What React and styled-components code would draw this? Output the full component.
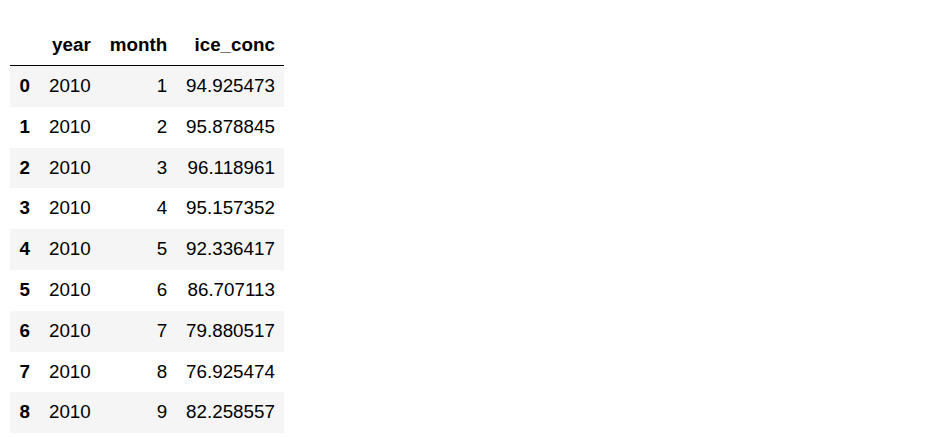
import React from 'react';
import styled, { createGlobalStyle } from 'styled-components';

const rows = [
	[2010, 1, '94.925473'],
	[2010, 2, '95.878845'],
	[2010, 3, '96.118961'],
	[2010, 4, '95.157352'],
	[2010, 5, '92.336417'],
	[2010, 6, '86.707113'],
	[2010, 7, '79.880517'],
	[2010, 8, '76.925474'],
	[2010, 9, '82.258557'],
];

const App = () => {
	return (
		<>
			<Global />
			<Frame>
				<Table>
					<thead>
						<tr>
							<Head></Head>
							<Head>year</Head>
							<Head>month</Head>
							<Head>ice_conc</Head>
						</tr>
					</thead>
					<tbody>
						{rows.map((r, i) => (
							<Row key={i} $striped={i % 2 === 0}>
								<Index>{i}</Index>
								<Cell>{r[0]}</Cell>
								<Cell>{r[1]}</Cell>
								<Cell>{r[2]}</Cell>
							</Row>
						))}
					</tbody>
				</Table>
			</Frame>
		</>
	);
}

export default App;

const Global = createGlobalStyle`
    body {
        margin: 0;
        background: #fff;
        font-family: "Liberation Sans", Arial, sans-serif;
    }
`

const Frame = styled.div`
    padding: 24px 0 0 10px;
`

const Table = styled.table`
    border-collapse: collapse;
    border-spacing: 0;
    font-size: 18.8px;
    color: #000;
`

const Head = styled.th`
    text-align: right;
    font-weight: bold;
    padding: 9px 9.5px;
    line-height: 23px;
    border-bottom: 1px solid #000;
    vertical-align: middle;
`

const Row = styled.tr`
    background: ${p => p.$striped ? '#f5f5f5' : '#fff'};
`

const Index = styled.th`
    text-align: right;
    font-weight: bold;
    padding: 9px 9.5px;
    line-height: 22.8px;
`

const Cell = styled.td`
    text-align: right;
    padding: 9px 9.5px;
    line-height: 22.8px;
`
